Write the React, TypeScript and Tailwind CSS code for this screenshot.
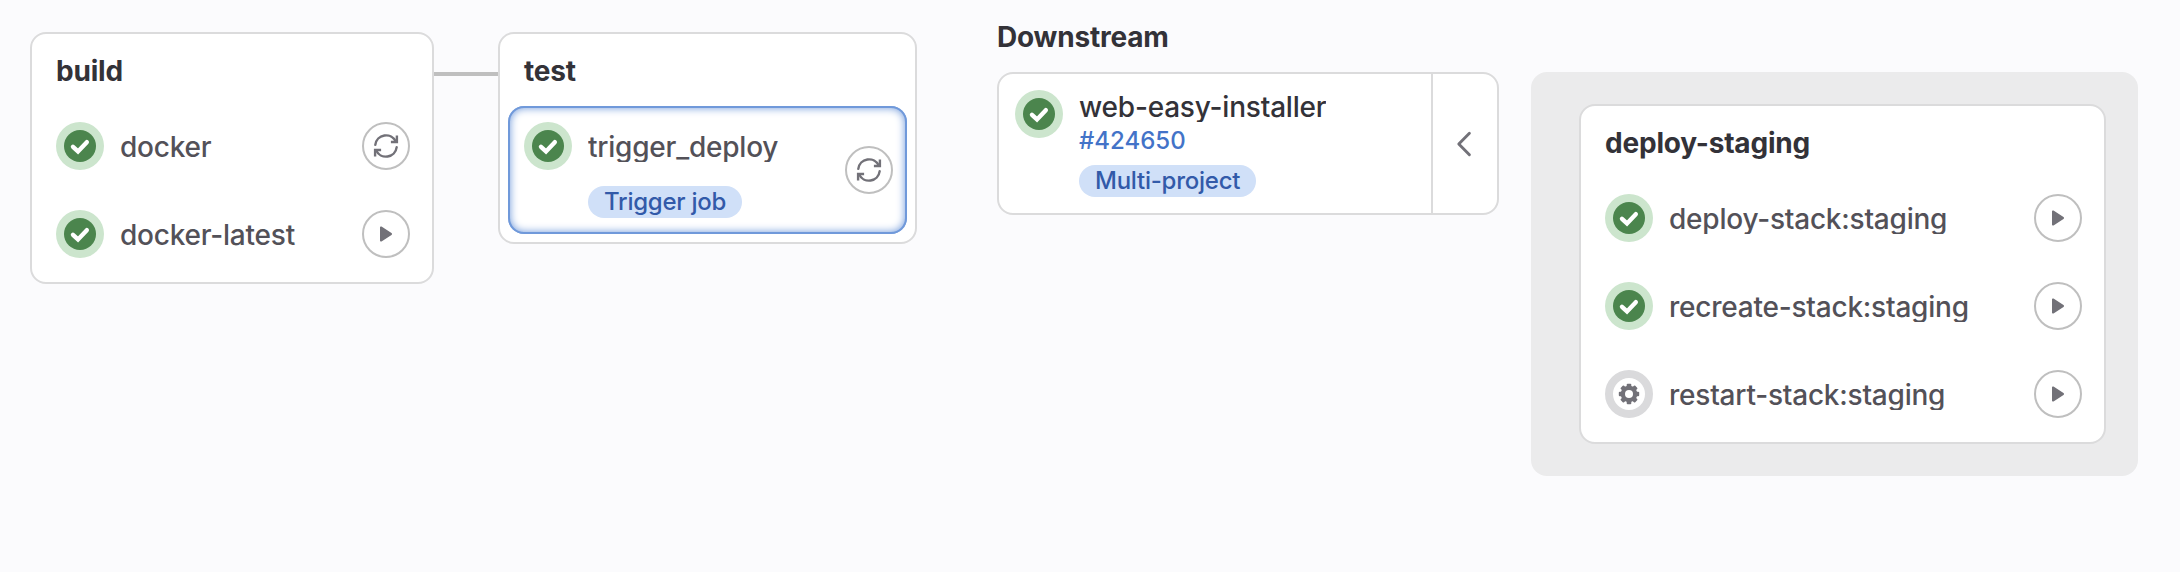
import type { ReactNode } from "react";

function SuccessIcon() {
  return (
    <svg viewBox="0 0 48 48" className="h-12 w-12 shrink-0">
      <circle cx="24" cy="24" r="24" fill="#cce5cd" />
      <circle cx="24" cy="24" r="16" fill="#4b854d" />
      <path d="M17 24.8 22 29.4 30.8 20.2" fill="none" stroke="#fff" strokeWidth="4.4" strokeLinejoin="miter" strokeLinecap="round" />
    </svg>
  );
}

function ManualIcon() {
  const teeth = [0, 45, 90, 135];
  return (
    <svg viewBox="0 0 48 48" className="h-12 w-12 shrink-0">
      <circle cx="24" cy="24" r="20" fill="#fff" stroke="#dadadc" strokeWidth="8" />
      {teeth.map((angle) => (
        <rect key={angle} x="21.7" y="13.8" width="4.6" height="20.4" rx="1" fill="#727178" transform={`rotate(${angle} 24 24)`} />
      ))}
      <circle cx="24" cy="24" r="8.3" fill="#727178" />
      <circle cx="24" cy="24" r="4" fill="#fff" />
    </svg>
  );
}

function ActionButton({ kind }: { kind: "retry" | "play" }) {
  return (
    <button className="flex h-12 w-12 shrink-0 items-center justify-center rounded-full border-2 border-[#bfbfbf] bg-white">
      <svg viewBox="0 0 24 24" className="h-6 w-6 overflow-visible" fill="none">
        {kind === "retry" ? (
          <g stroke="#727178" strokeWidth="2.4">
            <path d="M1.3 10.8A10.8 10.8 0 0 1 21.8 7.6" strokeLinecap="round" />
            <path d="M22.9 1.6V8H16.9" />
            <path d="M22.7 13.2A10.8 10.8 0 0 1 2.2 16.4" strokeLinecap="round" />
            <path d="M1.1 22.4V16H7.1" />
          </g>
        ) : (
          <path d="M6 5.4c0-.8.9-1.2 1.5-.8l10 6.4c.7.5.7 1.5 0 2l-10 6.4c-.6.4-1.5 0-1.5-.8z" fill="#727178" />
        )}
      </svg>
    </button>
  );
}

function Badge({ children }: { children: ReactNode }) {
  return (
    <span className="flex h-8 w-fit items-center rounded-full bg-[#d0e0f8] px-4 text-2xl font-[450] leading-8 tracking-[-0.24px] text-[#325aa9]">
      {children}
    </span>
  );
}

function JobName({ children }: { children: ReactNode }) {
  return (
    <span className="ml-4 mt-1 h-7 flex-1 truncate text-[28px] font-[450] leading-[26px] tracking-[-0.22px] text-[#535158]">
      {children}
    </span>
  );
}

function JobRow({ name, action, manual = false }: { name: string; action: "retry" | "play"; manual?: boolean }) {
  return (
    <div className="flex h-12 items-center">
      {manual ? <ManualIcon /> : <SuccessIcon />}
      <JobName>{name}</JobName>
      <ActionButton kind={action} />
    </div>
  );
}

function StageCard({ title, className, children }: { title: string; className: string; children: ReactNode }) {
  return (
    <section className={`${className} shrink-0 rounded-2xl border-2 border-[#dbdbdc] bg-white`}>
      <h2 className="ml-6 mt-4 h-[72px] text-[28px] font-bold leading-[42px] tracking-[-0.2px] text-[#333238]">{title}</h2>
      {children}
    </section>
  );
}

export default function App() {
  return (
    <main className="flex h-[572px] w-[2180px] items-start overflow-hidden bg-[#fbfbfd] pl-[30px] font-['Inter',sans-serif]">
      <StageCard title="build" className="mt-8 h-[252px] w-[404px]">
        <div className="flex flex-col gap-10 pl-6 pr-[22px]">
          <JobRow name="docker" action="retry" />
          <JobRow name="docker-latest" action="play" />
        </div>
      </StageCard>

      <div className="mt-[72px] h-1 w-16 shrink-0 bg-[#bfbfbf]" />

      <StageCard title="test" className="mt-8 h-[212px] w-[419px]">
        <div className="-mt-4 ml-2 flex h-32 w-[399px] items-center rounded-2xl pl-4 pr-3.5 shadow-[inset_0_0_0_2px_#7099da,inset_0_0_8px_2px_#7099da]">
          <div className="flex flex-1 flex-col">
            <div className="flex h-12 items-center">
              <SuccessIcon />
              <JobName>trigger_deploy</JobName>
            </div>
            <div className="ml-16 mt-4">
              <Badge>Trigger job</Badge>
            </div>
          </div>
          <ActionButton kind="retry" />
        </div>
      </StageCard>

      <section className="ml-20 w-[502px] shrink-0">
        <h2 className="mt-4 h-14 text-[28px] font-bold leading-[42px] tracking-[-0.2px] text-[#333238]">Downstream</h2>
        <div className="flex h-[143px] rounded-2xl border-2 border-[#dbdbdc] bg-white">
          <div className="flex flex-1 pl-4 pt-4">
            <SuccessIcon />
            <div className="ml-4 flex flex-col">
              <span className="h-8 truncate text-[28px] font-[450] leading-[34px] tracking-[-0.2px] text-[#333238]">web-easy-installer</span>
              <a className="mt-[3px] h-8 text-2xl font-[450] leading-8 text-[#4373c8]">#424650</a>
              <div className="mt-2">
                <Badge>Multi-project</Badge>
              </div>
            </div>
          </div>
          <button className="flex w-[66px] items-center justify-center border-l-2 border-[#dbdbdc] pr-0.5">
            <svg viewBox="0 0 16 26" className="h-[26px] w-4" fill="none" stroke="#727178" strokeWidth="2.9" strokeLinecap="round" strokeLinejoin="round">
              <path d="M13.4 2.2 2.8 13 13.4 23.8" />
            </svg>
          </button>
        </div>
      </section>

      <div className="ml-8 mt-[72px] h-[404px] w-[607px] shrink-0 rounded-2xl bg-[#ebebec] pl-12 pt-8">
        <StageCard title="deploy-staging" className="h-[340px] w-[527px]">
          <div className="flex flex-col gap-10 pl-6 pr-[22px]">
            <JobRow name="deploy-stack:staging" action="play" />
            <JobRow name="recreate-stack:staging" action="play" />
            <JobRow name="restart-stack:staging" action="play" manual />
          </div>
        </StageCard>
      </div>
    </main>
  );
}
